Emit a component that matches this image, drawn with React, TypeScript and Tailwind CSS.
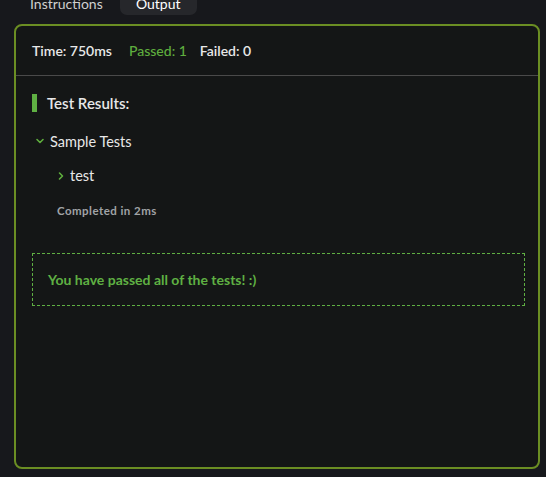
import React from 'react';

function ChevronDown() {
  return (
    <svg width="10" height="10" viewBox="0 0 10 10" fill="none" className="shrink-0">
      <path d="M2 3.5 L5 6.5 L8 3.5" stroke="#5fae3e" strokeWidth="1.6" strokeLinecap="round" strokeLinejoin="round" />
    </svg>
  );
}

function ChevronRight() {
  return (
    <svg width="10" height="10" viewBox="0 0 10 10" fill="none" className="shrink-0">
      <path d="M3.5 2 L6.5 5 L3.5 8" stroke="#5fae3e" strokeWidth="1.6" strokeLinecap="round" strokeLinejoin="round" />
    </svg>
  );
}

export default function App() {
  return (
    <div
      className="h-[477px] w-[546px] overflow-hidden bg-[#17181c] text-[#e8e8e8]"
      style={{ fontFamily: 'Lato, "Noto Sans", sans-serif' }}
    >
      <div className="-mt-[8px] flex h-[23px] items-stretch pl-[30px] text-[14px]">
        <div className="flex items-center pr-[17px] text-[#cfcfcf]">Instructions</div>
        <div className="flex w-[77px] items-center justify-center rounded-b-[7px] bg-[#26272b] text-white">Output</div>
      </div>
      <div className="mt-[9px] ml-[14px] flex h-[445px] w-[526px] flex-col rounded-[8px] border-2 border-[#6b8e23] bg-[#141616]">
        <div className="flex h-[50px] items-center border-b border-[#4a4a4a] pl-[16px] text-[14px] font-semibold">
          <span>Time: 750ms</span>
          <span className="ml-[17px] font-medium text-[#5fae3e]">Passed: 1</span>
          <span className="ml-[13px]">Failed: 0</span>
        </div>
        <div className="flex flex-col pl-[16px] pr-[13px] pt-[16px]">
          <div className="flex items-center gap-[10px]">
            <div className="h-[18px] w-[5px] bg-[#5fb043]" />
            <span className="text-[15px] font-semibold">Test Results:</span>
          </div>
          <div className="mt-[16px] flex items-center gap-[5px] pl-[3px] text-[14.5px]">
            <ChevronDown />
            <span>Sample Tests</span>
          </div>
          <div className="mt-[13px] flex items-center gap-[4px] pl-[24px] text-[14.5px]">
            <ChevronRight />
            <span>test</span>
          </div>
          <div className="mt-[15px] pl-[25px] text-[11.5px] font-bold tracking-[0.04em] text-[#a0a3a6]">Completed in 2ms</div>
          <div className="mt-[34px] flex h-[53px] items-center border border-dashed border-[#5fb043] pl-[15px] text-[14px] font-bold text-[#5fb043]">
            You have passed all of the tests! :)
          </div>
        </div>
      </div>
    </div>
  );
}
